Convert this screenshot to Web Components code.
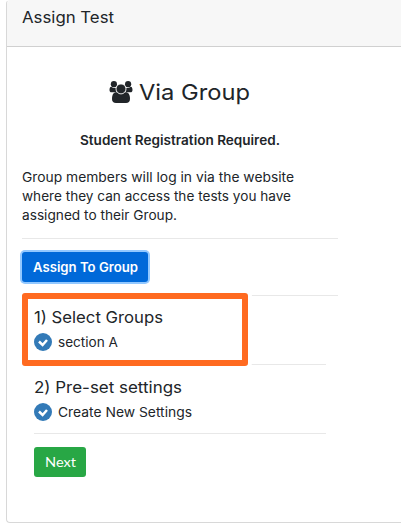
<!DOCTYPE html>
<html lang="en"><head><meta charset="utf-8"><title>Assign Test</title>
<style>
html,body{margin:0;background:#fff}
body{width:401px;height:524px;overflow:hidden;font-family:Inter,"Open Sans",sans-serif;color:#212529}
</style></head><body>
<assign-panel></assign-panel>
<script>
class WideText extends HTMLElement{
  connectedCallback(){
    const root=this.attachShadow({mode:'open'});
    root.innerHTML=`<style>:host{display:block;white-space:nowrap;width:${this.getAttribute('width')}px}
      span{display:inline-block;transform-origin:0 50%}</style><span><slot></slot></span>`;
    const s=root.querySelector('span');
    s.style.transform=`scaleX(${Number(this.getAttribute('width'))/s.getBoundingClientRect().width})`;
  }
}
class GroupIcon extends HTMLElement{
  connectedCallback(){
    this.attachShadow({mode:'open'}).innerHTML=`<style>:host{display:block;width:24px;height:22px}svg{display:block}</style>
    <svg width="24" height="22" viewBox="0 0 24 22" fill="#212529"><circle cx="4.9" cy="3.2" r="3.1"/><circle cx="19.1" cy="3.2" r="3.1"/>
    <path d="M2.2 5.8C1 6 .5 7.1.5 9c0 1.7.8 2.3 2 2.3h4.5l1.5-4.4C5 7.3 3.5 6.9 2.2 5.8zM21.8 5.8C23 6 23.5 7.1 23.5 9c0 1.7-.8 2.3-2 2.3h-4.5l-1.5-4.4c3.2.4 4.9 0 6.3-1.1z"/>
    <path d="M7.4 11.3c-3 0-4.4 2.6-4.4 6.7 0 2.7 1.5 4 4 4h10c2.5 0 4-1.3 4-4 0-4.1-1.4-6.7-4.4-6.7z"/>
    <circle cx="12" cy="7.9" r="5" stroke="#fff" stroke-width=".9"/></svg>`;
  }
}
class CheckOption extends HTMLElement{
  connectedCallback(){
    this.attachShadow({mode:'open'}).innerHTML=`<style>:host{display:flex;align-items:center;gap:6px;height:18px;font-size:13px;line-height:18px}svg{flex:none}</style>
    <svg width="18" height="18" viewBox="0 0 18 18"><circle cx="9" cy="9" r="9" fill="#337ab7"/><path d="M5 8.5l3.6 3.5L13 7" fill="none" stroke="#fff" stroke-width="2.5"/></svg><slot></slot>`;
  }
}
class ActionButton extends HTMLElement{
  connectedCallback(){
    this.attachShadow({mode:'open'}).innerHTML=`<style>:host{display:block}
    button{all:unset;box-sizing:border-box;display:flex;align-items:center;justify-content:center;height:30px;border-radius:3px;color:#fff;font-size:13px;line-height:20px;width:52px;background:#28a745}
    :host([kind=primary]) button{width:126px;background:#0069d9;box-shadow:0 0 0 2px #92c8ff;font-weight:600}
    :host([kind=success]) button{font:14px/20px Lato,sans-serif}</style><button><slot></slot></button>`;
  }
}
class SetupStep extends HTMLElement{
  connectedCallback(){
    this.attachShadow({mode:'open'}).innerHTML=`<style>:host{display:block;position:relative;box-sizing:border-box;height:68px;padding:12px 0 0 12px}
    .h{height:20px;font-size:16px;line-height:20px;margin-bottom:6px}
    :host([marked]){padding-top:11px}
    :host([marked])::before{content:"";position:absolute;left:0;top:-3px;width:225.5px;height:73px;box-sizing:border-box;border:6px solid #ff6a20;border-radius:3px;box-shadow:0 0 0 4px #fff}</style>
    <div class="h"><slot name="title"></slot></div><slot></slot>`;
  }
}
class AssignPanel extends HTMLElement{
  connectedCallback(){
    this.attachShadow({mode:'open'}).innerHTML=`<style>
    :host{display:block;box-sizing:border-box;height:523px;width:395px;margin-left:6px;border:1px solid #d8d8d8;border-top-color:#f7f7f7;border-right:0;border-radius:4px 0 0 4px;overflow:hidden}
    header{height:46px;box-sizing:border-box;border-bottom:1px solid #d0d0d0;background:#f7f7f7;padding:6px 0 0 15px;font-size:16px;line-height:20px}
    main{width:316px;padding-left:15px}
    .title{display:flex;gap:6px;margin-left:87px;padding-top:34px;height:24px;font-size:22px;line-height:22px}
    .required{padding:25px 0 0 58px;font-size:13px;line-height:20px;font-weight:600}
    .copy{padding-top:18px;font-size:13px;line-height:19px}
    .line{height:1px;background:#e8e8e8}
    .first{margin:13px 0}
    .steps-line{margin-top:13px}
    .short{margin:0 12px}
    action-button[kind=success]{margin:13px 0 0 12px}
    </style>
    <header><wide-text width="92">Assign Test</wide-text></header>
    <main>
      <div class="title"><group-icon></group-icon><wide-text width="111">Via Group</wide-text></div>
      <div class="required"><wide-text width="200">Student Registration Required.</wide-text></div>
      <div class="copy"><wide-text width="272">Group members will log in via the website</wide-text><wide-text width="269">where they can access the tests you have</wide-text><wide-text width="155">assigned to their Group.</wide-text></div>
      <div class="line first"></div>
      <action-button kind="primary"><wide-text width="105">Assign To Group</wide-text></action-button>
      <div class="line steps-line"></div>
      <setup-step marked><wide-text slot="title" width="129">1) Select Groups</wide-text><check-option><wide-text width="60">section A</wide-text></check-option></setup-step>
      <div class="line short"></div>
      <setup-step><wide-text slot="title" width="148">2) Pre-set settings</wide-text><check-option><wide-text width="134">Create New Settings</wide-text></check-option></setup-step>
      <div class="line short"></div>
      <action-button kind="success"><wide-text width="31">Next</wide-text></action-button>
    </main>`;
  }
}
customElements.define('wide-text',WideText);
customElements.define('group-icon',GroupIcon);
customElements.define('check-option',CheckOption);
customElements.define('action-button',ActionButton);
customElements.define('setup-step',SetupStep);
customElements.define('assign-panel',AssignPanel);
</script></body></html>
